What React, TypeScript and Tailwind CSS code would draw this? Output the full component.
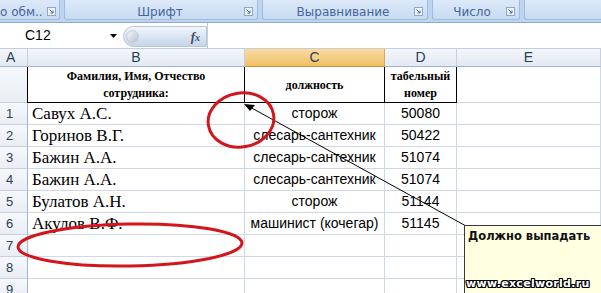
import React from "react";

const launcher = (
  <svg width="9" height="9" viewBox="0 0 9 9" className="shrink-0">
    <rect x="0.5" y="0.5" width="8" height="8" fill="#eef4fb" stroke="#8fa8c8" />
    <path d="M2.5 2.5 L6 6 M6 3.5 V6 H3.5" stroke="#4d6b94" strokeWidth="1" fill="none" />
  </svg>
);

function Group({ w, label, pad, center }: { w: string; label: string; pad?: string; center?: boolean }) {
  return (
    <div className={`${w} h-[20px] rounded-b-[3px] border border-t-0 border-[#9fbbe0] bg-gradient-to-b from-[#dce9f8] to-[#c8dbf2] flex items-end`}>
      <div className={`flex-1 h-[15px] flex items-center ${center ? "justify-center" : ""} ${pad ?? ""} text-[12px] leading-none text-[#46659a]`}>
        {label}
      </div>
      <div className="w-[18px] h-[15px] flex items-center justify-center">{launcher}</div>
    </div>
  );
}

function Ribbon() {
  return (
    <div className="h-[23px] bg-[#bfd4ee] border-b border-[#8ea9cf] flex gap-[4px] font-['DejaVu_Sans',sans-serif]">
      <div className="w-[60px] h-[20px] rounded-br-[3px] border border-t-0 border-l-0 border-[#9fbbe0] bg-gradient-to-b from-[#dce9f8] to-[#c8dbf2] flex items-end">
        <div className="flex-1 h-[15px] flex items-center text-[12px] leading-none text-[#46659a] overflow-hidden whitespace-nowrap">о обм...</div>
        <div className="w-[16px] h-[15px] flex items-center justify-center">{launcher}</div>
      </div>
      <Group w="w-[194px]" label="Шрифт" center pad="pl-[16px]" />
      <Group w="w-[166px]" label="Выравнивание" center pad="pl-[14px]" />
      <Group w="w-[88px]" label="Число" center pad="pl-[10px]" />
      <div className="flex-1 h-[20px] rounded-bl-[3px] border border-t-0 border-r-0 border-[#9fbbe0] bg-gradient-to-b from-[#dce9f8] to-[#c8dbf2]" />
    </div>
  );
}

function FormulaBar() {
  return (
    <div className="h-[26px] bg-white border-b border-[#c3cfdf] flex items-stretch font-['Liberation_Sans',sans-serif]">
      <div className="w-[123px] flex items-center pl-[25px] pr-[6px]">
        <span className="text-[14px] text-black flex-1">C12</span>
        <svg width="7" height="4" viewBox="0 0 7 4">
          <path d="M0 0 H7 L3.5 4 Z" fill="#000" />
        </svg>
      </div>
      <div className="w-[84px] mt-[3px] mb-[1px] rounded-l-full bg-gradient-to-b from-[#f2f6fb] via-[#dbe5f2] to-[#c6d5e9] border border-[#b7c7dd] flex items-center justify-between pl-[2px] pr-[6px]">
        <div className="w-[13px] h-[13px] rounded-full bg-gradient-to-br from-[#f4f6f9] to-[#b9c3cf] border border-[#c3ccd8]" />
        <span className="font-['Liberation_Serif',serif] italic font-bold text-[13px] text-[#3d4e63] leading-none">
          f<span className="text-[10px]">x</span>
        </span>
      </div>
      <div className="flex-1 border-l border-[#c3cfdf] bg-white" />
    </div>
  );
}

const rows: [string, string, string][] = [
  ["Савух А.С.", "сторож", "50080"],
  ["Горинов В.Г.", "слесарь-сантехник", "50422"],
  ["Бажин А.А.", "слесарь-сантехник", "51074"],
  ["Бажин А.А.", "слесарь-сантехник", "51074"],
  ["Булатов А.Н.", "сторож", "51144"],
  ["Акулов В.Ф.", "машинист (кочегар)", "51145"],
  ["", "", ""],
  ["", "", ""],
  ["", "", ""],
];

function Grid() {
  const hdr = "h-[18px] border-r border-b border-r-[#c5d1e0] border-b-[#9eb6ce] bg-gradient-to-b from-[#f4f7fb] to-[#e2e9f3] flex items-center justify-center text-[14px] text-[#2a3d58]";
  const rowHdr = "border-r border-b border-r-[#9eb6ce] border-b-[#c5d1e0] bg-gradient-to-b from-[#f6f8fb] to-[#e9eef5] flex items-center pl-[6px] text-[13px] text-[#2a3d58]";
  const cell = "border-r border-b border-[#d0d7e5] flex items-center";
  return (
    <div className="grid grid-cols-[28px_217px_140px_72px_1fr] font-['Liberation_Sans',sans-serif]">
      <div className={`${hdr} !justify-start pl-[6px]`}>A</div>
      <div className={hdr}>B</div>
      <div className="h-[18px] border-r border-b border-r-[#d9a95a] border-b-[#c9963f] bg-gradient-to-b from-[#f9dba3] to-[#f1c163] flex items-center justify-center text-[14px] text-[#2a3d58]">C</div>
      <div className={hdr}>D</div>
      <div className={hdr}>E</div>

      <div className={`${rowHdr} h-[36px]`} />
      <div className="h-[36px] border-l border-black -ml-px border-r border-b border-r-black border-b-black flex flex-col items-center justify-center font-['Liberation_Serif',serif] font-bold text-[12px] leading-[17px] text-black">
        <span>Фамилия, Имя, Отчество</span>
        <span>сотрудника:</span>
      </div>
      <div className="h-[36px] border-r border-b border-black flex items-center justify-center font-['Liberation_Serif',serif] font-bold text-[12px] text-black">
        должность
      </div>
      <div className="h-[36px] border-r border-b border-black flex flex-col items-center justify-center font-['Liberation_Serif',serif] font-bold text-[12px] leading-[17px] text-black">
        <span>табельный</span>
        <span>номер</span>
      </div>
      <div className={`${cell} h-[36px]`} />

      {rows.map((r, i) => (
        <React.Fragment key={i}>
          <div className={`${rowHdr} h-[22px]`}>{i + 1}</div>
          <div className={`${cell} h-[22px] pl-[4px] font-['Liberation_Serif',serif] text-[17px] text-black whitespace-nowrap`}>{r[0]}</div>
          <div className={`${cell} h-[22px] justify-center text-[14px] text-black whitespace-nowrap`}>{r[1]}</div>
          <div className={`${cell} h-[22px] justify-center text-[14px] text-black`}>{r[2]}</div>
          <div className={`${cell} h-[22px]`} />
        </React.Fragment>
      ))}
    </div>
  );
}

export default function App() {
  return (
    <div className="relative w-[601px] h-[293px] overflow-hidden bg-white">
      <Ribbon />
      <FormulaBar />
      <Grid />

      <svg className="absolute inset-0 pointer-events-none" width="601" height="293" viewBox="0 0 601 293">
        <line x1="466" y1="226" x2="248" y2="106" stroke="#000" strokeWidth="1" />
        <polygon points="244,104 255,105 250,111" fill="#000" />
        <ellipse cx="241" cy="120" rx="33" ry="27" fill="none" stroke="#d3151c" strokeWidth="3" transform="rotate(-10 241 120)" />
        <ellipse cx="130" cy="245" rx="112" ry="21" fill="none" stroke="#d3151c" strokeWidth="3" transform="rotate(-1 130 245)" />
      </svg>

      <div className="absolute left-[464px] top-[225px] w-[150px] h-[80px] bg-[#ffffe1] border border-[#3a3a3a] pl-[3px] pt-[3px] font-['DejaVu_Sans',sans-serif]">
        <div className="text-[11.5px] font-bold text-[#111] leading-[14px]">Должно выпадать</div>
      </div>
      <div className="absolute left-[466px] top-[278px] text-[11px] font-bold text-white leading-none tracking-[0.3px] font-['DejaVu_Sans',sans-serif] [text-shadow:1px_0_0_#000,-1px_0_0_#000,0_1px_0_#000,0_-1px_0_#000,1px_1px_0_#000,-1px_-1px_0_#000,1px_-1px_0_#000,-1px_1px_0_#000]">
        www.excelworld.ru
      </div>
    </div>
  );
}
